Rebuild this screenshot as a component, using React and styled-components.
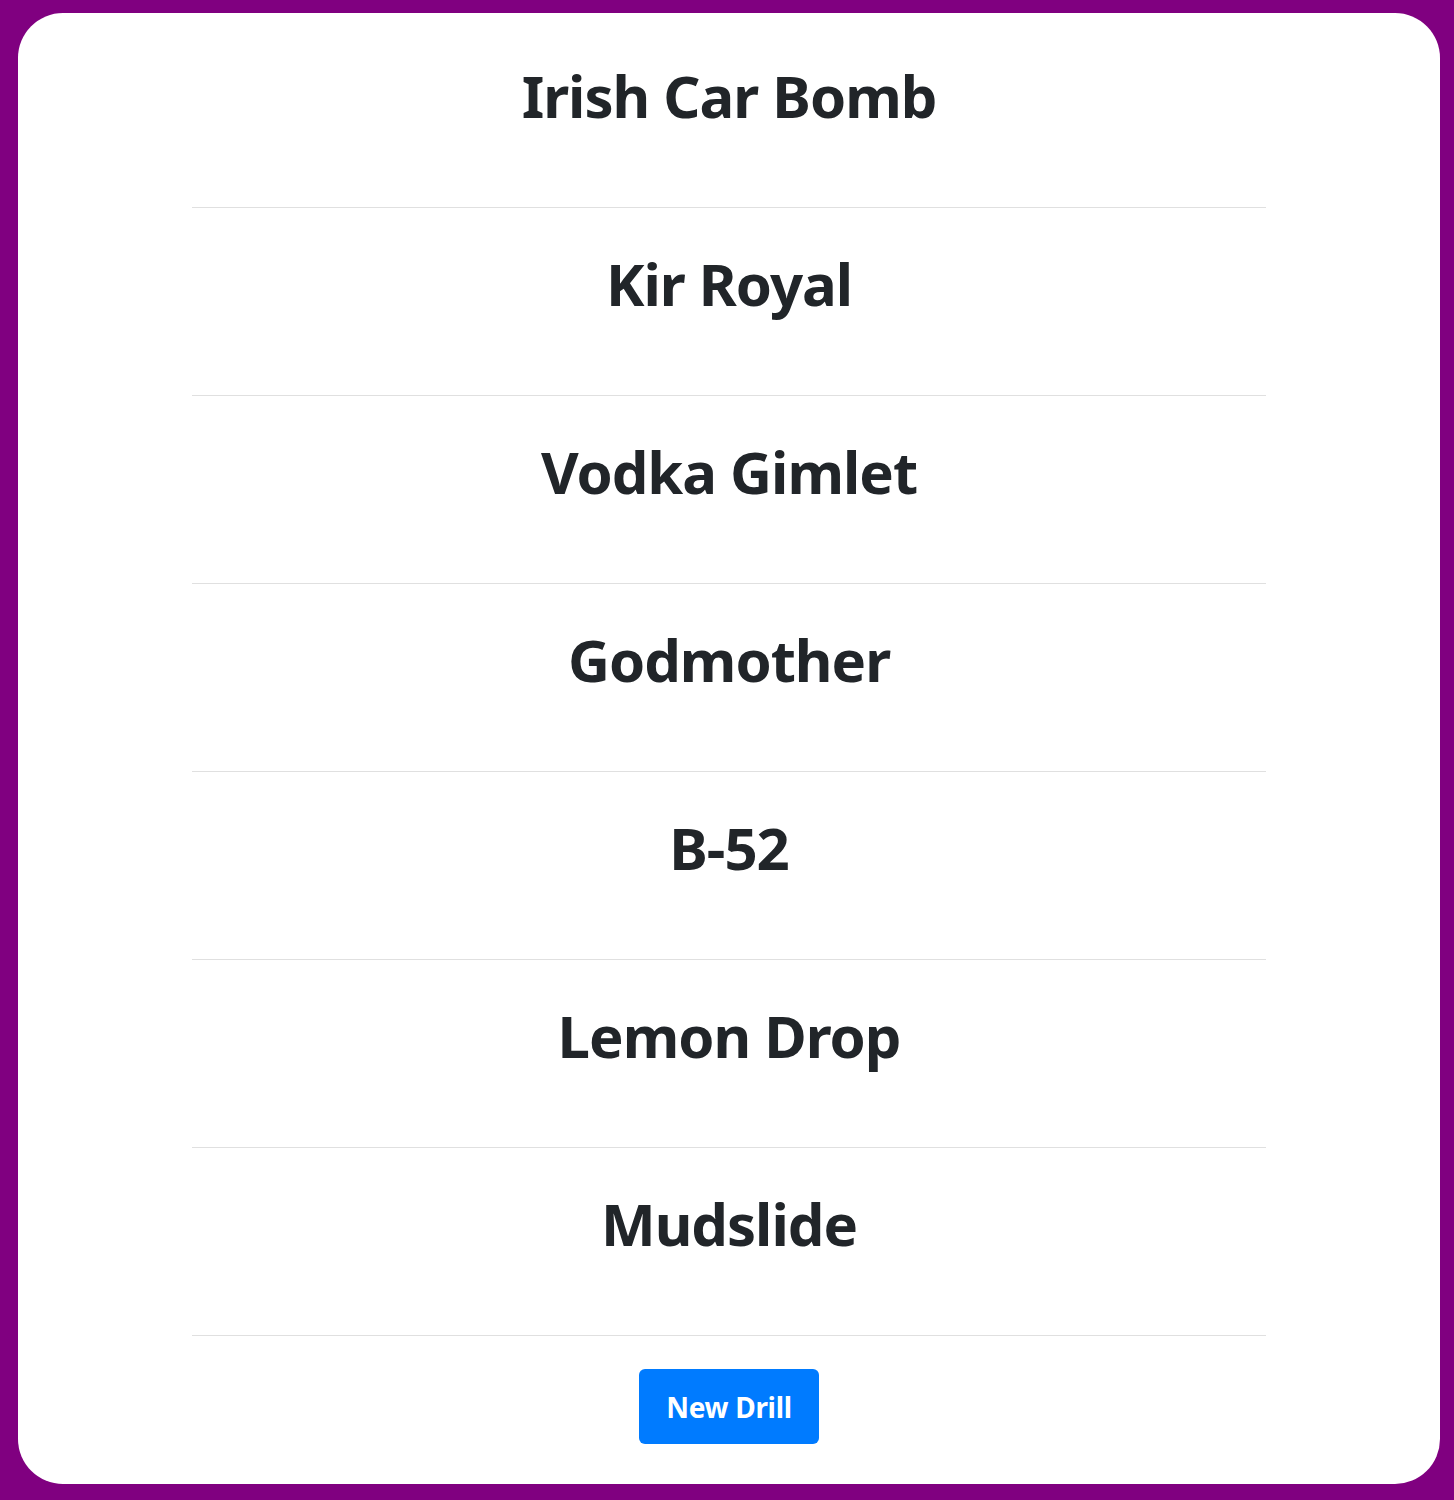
import React from "react";
import styled, { createGlobalStyle } from "styled-components";

const drinks = [
  "Irish Car Bomb",
  "Kir Royal",
  "Vodka Gimlet",
  "Godmother",
  "B-52",
  "Lemon Drop",
  "Mudslide",
];

const GlobalStyle = createGlobalStyle`
  * { box-sizing: border-box; }
  html, body {
    margin: 0;
    background: #800080;
  }
  body {
    padding: 13px 14px 16px 18px;
    font-family: "Noto Sans", "DejaVu Sans", sans-serif;
    color: #212529;
  }
`;

const Card = styled.div`
  background: #fff;
  border-radius: 45px;
  height: 1471px;
  padding-top: 7px;
  display: flex;
  flex-direction: column;
  align-items: center;
`;

const List = styled.ul`
  list-style: none;
  margin: 0;
  padding: 0;
  width: 1074px;
`;

const Item = styled.li`
  height: 188px;
  border-bottom: 1px solid #e0e0e0;
  display: flex;
  justify-content: center;
  padding-top: 41px;
`;

const Name = styled.h1`
  margin: 0;
  font-size: 58px;
  font-weight: 700;
  line-height: 70px;
  letter-spacing: -1px;
`;

const Button = styled.button`
  margin-top: 33px;
  width: 180px;
  height: 75px;
  border: 0;
  border-radius: 6px;
  background: #007bff;
  color: #fff;
  font-family: inherit;
  font-size: 28px;
  font-weight: 700;
  letter-spacing: -0.3px;
  cursor: pointer;
`;

const App = () => {
  return (
    <>
      <GlobalStyle />
      <Card>
        <List>
          {drinks.map((d) => (
            <Item key={d}>
              <Name>{d}</Name>
            </Item>
          ))}
        </List>
        <Button>New Drill</Button>
      </Card>
    </>
  );
};

export default App;
